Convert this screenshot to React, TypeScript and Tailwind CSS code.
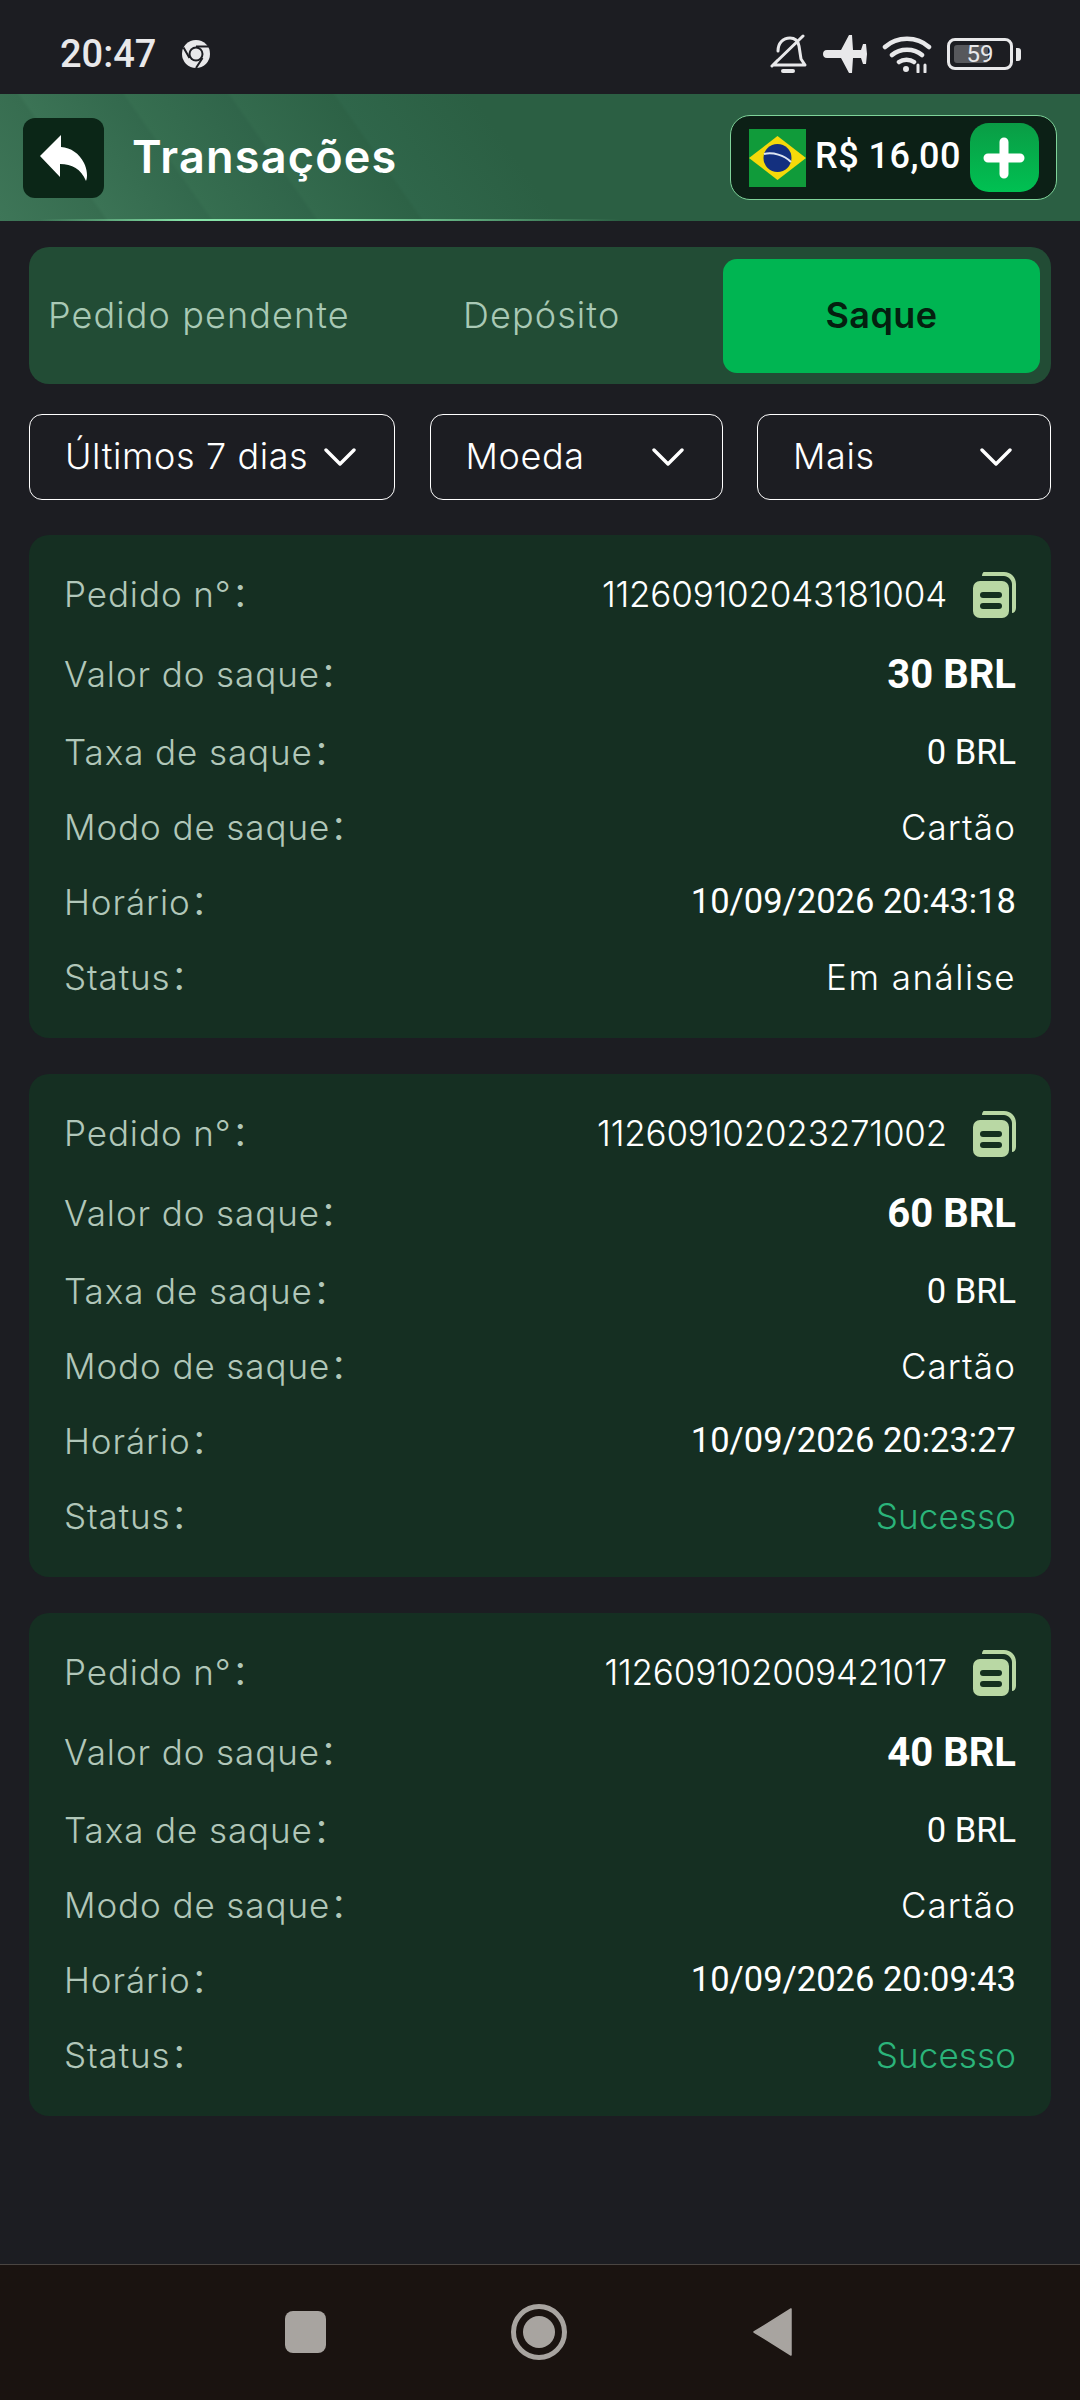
const sans = 'font-["Inter","Noto_Sans_CJK_SC",sans-serif]';

const orders = [
  { id: '112609102043181004', amount: '30 BRL', time: '10/09/2026 20:43:18', status: 'Em análise' },
  { id: '112609102023271002', amount: '60 BRL', time: '10/09/2026 20:23:27', status: 'Sucesso' },
  { id: '112609102009421017', amount: '40 BRL', time: '10/09/2026 20:09:43', status: 'Sucesso' },
];

function Chevron() {
  return (
    <svg width="32" height="20" viewBox="0 0 32 20" fill="none" stroke="white" strokeWidth="3.4" strokeLinecap="round" strokeLinejoin="round">
      <path d="M2 3l14 14L30 3" />
    </svg>
  );
}

function Filter({ label, width }: { label: string; width: string }) {
  return (
    <div className={`${width} h-[86px] flex items-center justify-between rounded-[13px] border border-white pl-[35px] pr-[38px] text-[36px] font-[350] text-white tracking-[0.6px]`}>
      <span className="-mt-[3px]">{label}</span>
      <Chevron />
    </div>
  );
}

function CopyIcon() {
  return (
    <svg width="43" height="46" viewBox="0 0 43 46" className="ml-[26px]">
      <path d="M11 0h20c7 0 12 5 12 12v24c0 3-2 5-4 5V12c0-4-4-8-8-8H9c0-2 1-4 2-4z" fill="#b9d8a4" />
      <rect x="0" y="9" width="36" height="37" rx="7" fill="#b9d8a4" />
      <rect x="7" y="20" width="22" height="6" rx="3" fill="#14301f" />
      <rect x="7" y="31" width="22" height="6" rx="3" fill="#14301f" />
    </svg>
  );
}

function Row({ label, height, children }: { label: string; height: string; children: React.ReactNode }) {
  return (
    <div className={`${height} flex items-center justify-between`}>
      <span className="text-[35px] font-[350] text-[#b1c7b9] tracking-[0.9px]">{label}</span>
      {children}
    </div>
  );
}

function OrderCard({ id, amount, time, status }: { id: string; amount: string; time: string; status: string }) {
  const roboto = 'font-["Roboto",sans-serif] text-white';
  return (
    <div className="rounded-[20px] bg-[#152f22] px-[35px] pt-[20px] pb-[23px]">
      <Row label="Pedido n°：" height="h-[79px]">
        <div className="flex items-center">
          <span className="text-[35px] font-[350] text-white tracking-[-0.2px]">{id}</span>
          <CopyIcon />
        </div>
      </Row>
      <Row label="Valor do saque：" height="h-[81px]">
        <span className={`${roboto} text-[40px] font-bold`}>{amount}</span>
      </Row>
      <Row label="Taxa de saque：" height="h-[75px]">
        <span className={`${roboto} text-[34.5px]`}>0 BRL</span>
      </Row>
      <Row label="Modo de saque：" height="h-[74px]">
        <span className="text-[35px] font-[350] text-white tracking-[1.1px]">Cartão</span>
      </Row>
      <Row label="Horário：" height="h-[76px]">
        <span className={`${roboto} text-[34.5px]`}>{time}</span>
      </Row>
      <Row label="Status：" height="h-[75px]">
        <span className={`text-[35px] font-[350] ${status === 'Sucesso' ? 'text-[#2bb47a] tracking-[0.1px]' : 'text-white tracking-[1.5px]'}`}>{status}</span>
      </Row>
    </div>
  );
}

function StatusBar() {
  return (
    <div className="h-[94px] flex items-center justify-between pl-[60px] pr-[59px] pt-[14px] bg-[#1c1d22] text-[#e8e8ea]">
      <div className="flex items-center">
        <span className='font-["Roboto",sans-serif] text-[38px] font-medium'>20:47</span>
        <svg width="28" height="28" viewBox="0 0 28 28" className="ml-[26px]">
          <circle cx="14" cy="14" r="14" fill="#e8e8ea" />
          <circle cx="14" cy="14" r="7.5" fill="#1c1d22" />
          <circle cx="14" cy="14" r="5.5" fill="#e8e8ea" />
          <path d="M14 6.5h12.5M7.5 18L1.5 7.5M20.5 18l-6.500 10" stroke="#1c1d22" strokeWidth="2" />
        </svg>
      </div>
      <div className="flex items-center">
        <svg width="38" height="40" viewBox="0 0 38 40" fill="none" stroke="#e8e8ea" strokeWidth="3" strokeLinecap="round" strokeLinejoin="round">
          <path d="M9 17c0-8 5-13 12-13 5 0 8 3 9 8l2 13 4 6H4l5-5M34 2L3 32" />
          <path d="M14 37h10" strokeWidth="4" />
        </svg>
        <svg width="44" height="38" viewBox="0 0 44 38" fill="#e8e8ea" className="ml-[16px]">
          <path d="M4 15h14L26 0h3l1 15h8l2-6h3l1 10-1 10h-3l-2-6h-8l-1 15h-3l-8-15H4c-3 0-4-2-4-4s1-4 4-4z" />
        </svg>
        <svg width="50" height="38" viewBox="0 0 50 38" fill="none" stroke="#e8e8ea" strokeWidth="4.500" strokeLinecap="round" className="ml-[15px]">
          <path d="M3 12c12-11 32-11 44 0M10 20c8-7 22-7 30 0M17 27c4-3 11-3 15 0" />
          <circle cx="24" cy="34" r="2" fill="#e8e8ea" strokeWidth="2" />
          <path d="M36 30v7M43 30v7" strokeWidth="3" />
        </svg>
        <div className="relative ml-[15px] w-[66px] h-[32px] rounded-[8px] border-[3px] border-[#e8e8ea] flex items-center justify-center">
          <div className="absolute left-[4px] top-[4px] bottom-[4px] w-[34px] rounded-[3px] bg-[#57585c]" />
          <span className='relative font-["Roboto",sans-serif] text-[24px] leading-none'>59</span>
        </div>
        <div className="ml-[3px] w-[5px] h-[13px] rounded-r-[3px] bg-[#e8e8ea]" />
      </div>
    </div>
  );
}

function Header() {
  return (
    <div className="relative h-[127px] flex items-center justify-between pl-[23px] pr-[23px] bg-[linear-gradient(55deg,#3e7658_0%,#376d50_9%,#3b7355_9.4%,#33694d_18%,#366e50_18.4%,#30654a_27%,#336a4d_27.4%,#2d6246_36%,#2f664a_36.4%,#2b5f43_48%,#2b5f43_100%)]">
      <div className="flex items-center">
        <div className="w-[81px] h-[80px] rounded-[12px] bg-[#0b2617] flex items-center justify-center">
          <svg width="48" height="46" viewBox="0 0 48 46" fill="white">
            <path d="M21 0L0 21l20 21V29c12 0 21 5 26 17 2-4 1-12-2-18C39 18 31 13 21 12z" />
          </svg>
        </div>
        <span className="ml-[28px] -mt-[2px] text-[45px] font-semibold text-white tracking-[1.2px]">Transações</span>
      </div>
      <div className="w-[327px] h-[85px] rounded-[20px] border border-[#7fd39a] bg-[#0c2016] flex items-center pl-[18px]">
        <svg width="57" height="58" viewBox="0 0 57 58">
          <rect width="57" height="58" fill="#109b3a" />
          <path d="M28.500 7L57 29 28.500 51 0 29z" fill="#f5d90a" />
          <circle cx="28.500" cy="29" r="14" fill="#14307f" />
          <path d="M15 25c9-2 20 1 27 8" stroke="#dfe6f2" strokeWidth="2" fill="none" />
        </svg>
        <span className='ml-[9px] -mt-[3px] font-["Roboto",sans-serif] text-[36px] font-medium text-white tracking-[0.5px]'>R$ 16,00</span>
        <div className="ml-[9px] w-[69px] h-[69px] rounded-[19px] bg-[linear-gradient(180deg,#0a9c45,#00c152)] flex items-center justify-center">
          <svg width="42" height="42" viewBox="0 0 42 42" stroke="white" strokeWidth="9" strokeLinecap="round">
            <path d="M21 5v32M5 21h32" />
          </svg>
        </div>
      </div>
      <div className="absolute left-[40px] right-[460px] bottom-0 h-[2px] bg-[linear-gradient(90deg,transparent,#86e3a8_25%,#86e3a8_50%,transparent)]" />
    </div>
  );
}

export default function App() {
  return (
    <div className={`w-[1080px] h-[2400px] flex flex-col bg-[#1c1d22] ${sans}`}>
      <StatusBar />
      <Header />
      <main className="flex-1 px-[29px] pt-[26px]">
        <div className="h-[137px] rounded-[20px] bg-[#224c35] flex items-center pl-[19px] pr-[11px] text-[36px] font-[350] text-[#a9c9b5] tracking-[1.1px]">
          <span className="w-[321px] -mt-[2px] whitespace-nowrap">Pedido pendente</span>
          <span className="w-[354px] -mt-[2px] pl-[94px]">Depósito</span>
          <div className="w-[317px] h-[114px] pb-[2px] rounded-[14px] bg-[#00b552] flex items-center justify-center font-semibold text-[#04200f] tracking-[0.4px]">Saque</div>
        </div>
        <div className="mt-[30px] flex justify-between">
          <Filter label="Últimos 7 dias" width="w-[366px]" />
          <Filter label="Moeda" width="w-[293px]" />
          <Filter label="Mais" width="w-[294px]" />
        </div>
        <div className="mt-[35px] flex flex-col gap-[36px]">
          {orders.map((o) => (
            <OrderCard key={o.id} {...o} />
          ))}
        </div>
      </main>
      <div className="h-[136px] border-t border-[#4a4542] bg-[#1a1310] relative">
        <div className="absolute left-[285px] top-[46px] w-[41px] h-[42px] rounded-[8px] bg-[#a8a4a0]" />
        <div className="absolute left-[511px] top-[39px] w-[56px] h-[56px] rounded-full border-[5px] border-[#a8a4a0] flex items-center justify-center">
          <div className="w-[32px] h-[32px] rounded-full bg-[#a8a4a0]" />
        </div>
        <svg width="40" height="48" viewBox="0 0 40 48" className="absolute left-[753px] top-[43px]">
          <path d="M38 1v46L1 24z" fill="#a8a4a0" stroke="#a8a4a0" strokeWidth="1.500" strokeLinejoin="round" />
        </svg>
      </div>
    </div>
  );
}
